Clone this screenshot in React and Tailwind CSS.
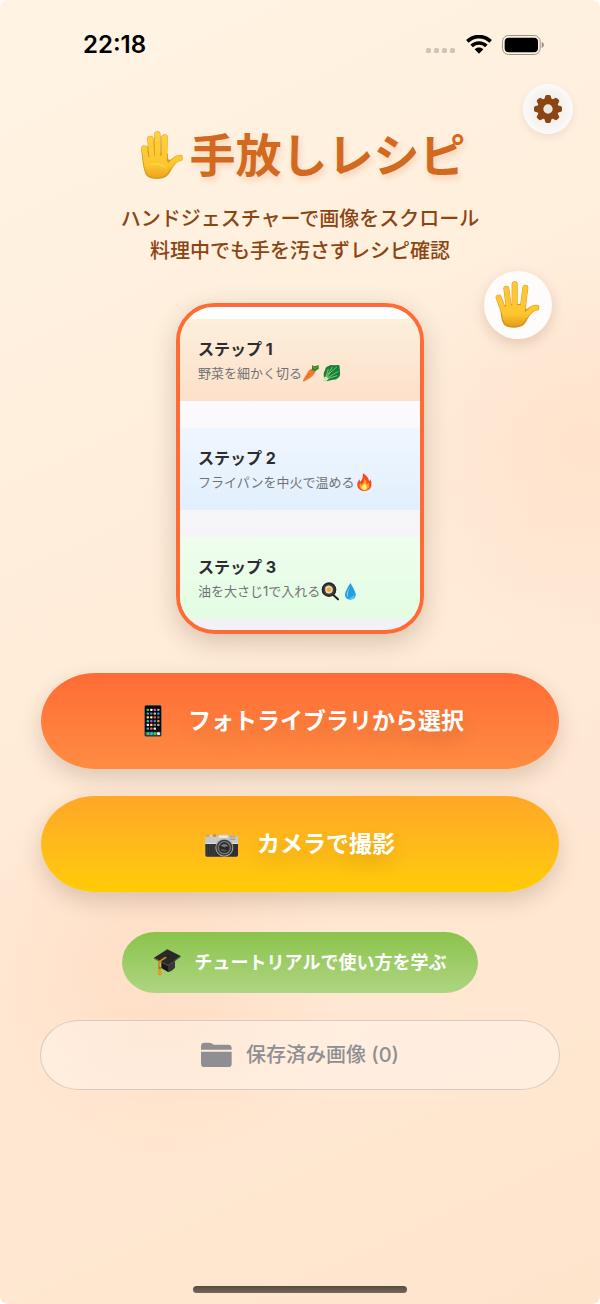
const steps = [
  { id: 1, text: "野菜を細かく切る", color: "from-[#fcefdc] to-[#fde0c9]", icons: [Carrot, Greens] },
  { id: 2, text: "フライパンを中火で温める", color: "from-[#f0f6fe] to-[#e1f0fd]", icons: [Fire] },
  { id: 3, text: "油を大さじ1で入れる", color: "from-[#effeee] to-[#e3fce3]", icons: [Pan, Drop] },
];

const App = () => {
  return (
    <div className="bg-white font-['Inter','Noto_Sans_CJK_JP',sans-serif]">
      <div className="min-h-screen flex flex-col rounded-lg overflow-hidden bg-[radial-gradient(circle_at_97%_34%,rgba(255,180,140,0.17),transparent_200px),radial-gradient(circle_at_26%_74%,rgba(255,170,130,0.18),transparent_200px),linear-gradient(155deg,#fff4e4_0%,#ffecd9_45%,#ffe4cc_100%)]">
        <StatusBar />

        <main className="flex-1 flex flex-col px-[41px]">
          <div className="flex justify-end -mr-3.5">
            <button
              aria-label="設定"
              className="size-[50px] rounded-full flex items-center justify-center bg-radial from-[#eae5e1] to-[#fbfaf8] to-70% shadow-[0_3px_8px_rgba(0,0,0,0.08)]"
            >
              <Gear />
            </button>
          </div>

          <h1 className="-mt-1 flex items-center justify-center gap-1 text-[46px] leading-[50px] font-bold text-[#d2691e] whitespace-nowrap [text-shadow:2px_4px_6px_rgba(210,105,30,0.2)]">
            <RaisedHand />
            手放しレシピ
          </h1>

          <p className="mt-[23px] text-center text-[20px] leading-8 font-medium text-[#8b4513]">
            ハンドジェスチャーで画像をスクロール
            <br />
            料理中でも手を汚さずレシピ確認
          </p>

          <div className="relative mt-9">
            <StepCard />
            {/* floating hand over the card corner */}
            <div className="absolute -top-8 right-[7px] size-[68px] rounded-full flex items-center justify-center bg-[#fdfcfb] shadow-[0_5px_14px_rgba(80,40,0,0.16)]">
              <SpreadHand />
            </div>
          </div>

          <div className="mt-[39px] flex flex-col gap-[27px]">
            <button className="h-24 rounded-[54px_/_48px] flex items-center justify-center gap-[18px] text-[23px] font-bold text-white bg-linear-to-b from-[#ff6b35] to-[#ff8c42] shadow-[0_9px_22px_rgba(60,40,20,0.18)] [text-shadow:0_9px_20px_rgba(0,0,0,0.14)]">
              <Phone />
              フォトライブラリから選択
            </button>
            <button className="h-24 rounded-[54px_/_48px] flex items-center justify-center gap-[18px] text-[23px] font-bold text-white bg-linear-to-b from-[#ffa726] to-[#ffcc02] shadow-[0_9px_22px_rgba(60,40,20,0.18)] [text-shadow:0_9px_20px_rgba(0,0,0,0.14)]">
              <Camera />
              カメラで撮影
            </button>
          </div>

          <button className="mt-10 h-[61px] px-8 self-center rounded-[34px_/_31px] flex items-center gap-3.5 text-[18px] font-bold text-white bg-linear-to-b from-[#8bc34a] to-[#aed581]">
            <Cap />
            チュートリアルで使い方を学ぶ
          </button>

          <button className="mt-7 h-[68px] rounded-[38px_/_34px] flex items-center justify-center gap-3.5 text-[20px] font-medium text-[#8e8e93] bg-white/30 ring-1 ring-[#d9cabd]">
            <Folder />
            保存済み画像 (0)
          </button>
        </main>

        <div className="mx-auto mb-[11px] h-[7px] w-[214px] rounded-full bg-linear-to-b from-[#554a41] to-[#75695e]" />
      </div>
    </div>
  );
};

function StatusBar() {
  return (
    <header className="h-[84px] pt-1.5 pl-[83px] pr-14 flex items-center justify-between">
      <span className="text-[24px] font-semibold text-black">22:18</span>
      <div className="flex items-center gap-2.5">
        <svg width="30" height="20" viewBox="0 0 30 20" fill="#d1c5b8">
          <rect x="0" y="13" width="5" height="5" rx="1.5" />
          <rect x="8" y="13" width="5" height="5" rx="1.5" />
          <rect x="16" y="13" width="5" height="5" rx="1.5" />
          <rect x="24" y="13" width="5" height="5" rx="1.5" />
        </svg>
        <svg width="26" height="20" viewBox="0 0 78 60" fill="none" stroke="#000" strokeWidth="11">
          <path d="M4 19C24 0 54 0 74 19" />
          <path d="M17 33C29 21 49 21 61 33" />
          <path d="M39 56L26 43C33 36 45 36 52 43Z" fill="#000" stroke="none" />
        </svg>
        <svg width="42" height="20" viewBox="0 0 126 60">
          <rect x="1.500" y="1.500" width="113" height="57" rx="18" fill="none" stroke="#9d9488" strokeWidth="3" />
          <rect x="8" y="8" width="100" height="44" rx="12" fill="#000" />
          <path d="M119 21C128 23 128 37 119 39Z" fill="#9d9488" />
        </svg>
      </div>
    </header>
  );
}

function StepCard() {
  return (
    <div className="mx-auto w-[248px] border-4 border-[#ff6b35] rounded-[38px] overflow-hidden pt-3 pb-[11px] flex flex-col gap-[27px] bg-linear-to-b from-white to-[#f1f1f6] shadow-[0_8px_26px_rgba(70,45,20,0.22)]">
      {steps.map(({ id, text, color, icons }) => (
        <section key={id} className={`h-[82px] px-[18px] pt-[19px] bg-linear-to-b ${color}`}>
          <h2 className="text-[16px] leading-[22px] font-bold text-[#2d2d30]">ステップ {id}</h2>
          <p className="flex items-center text-[13px] leading-[26px] text-[#727275] whitespace-nowrap">
            {text}
            {icons.map((Icon, i) => (
              <Icon key={i} />
            ))}
          </p>
        </section>
      ))}
    </div>
  );
}

function Gear() {
  return (
    <svg width="28" height="28" viewBox="-42 -42 84 84">
      <g fill="#8b4513">
        {[0, 45, 90, 135, 180, 225, 270, 315].map((a) => (
          <path key={a} d="M-12 -26L-8 -39Q-7 -42 -4 -42H4Q7 -42 8 -39L12 -26Z" transform={`rotate(${a})`} />
        ))}
      </g>
      <circle r="23" fill="none" stroke="#8b4513" strokeWidth="18" />
    </svg>
  );
}

function RaisedHand() {
  return (
    <svg width="51" height="50" viewBox="-9 0 153 150" className="shrink-0" strokeLinecap="round" strokeLinejoin="round">
      <defs>
        <linearGradient id="palmA" x1="0" y1="0" x2="0" y2="150" gradientUnits="userSpaceOnUse">
          <stop offset="0" stopColor="#ffd23c" />
          <stop offset="0.7" stopColor="#fcc62d" />
          <stop offset="1" stopColor="#e99f18" />
        </linearGradient>
      </defs>
      {/* darker rim first, then the skin */}
      <g stroke="#e5a32c" strokeWidth="19" fill="none">
        <path d="M19 55L27 105M37 27L43 95M58 13L59 90M80 22L78 100M125 84C112 84 102 98 94 110" />
      </g>
      <path d="M10 60L90 72C88 92 94 93 106 83L116 95C104 108 100 125 87 138C74 150 38 150 26 137C15 121 13 88 10 60Z" fill="#dd9823" />
      <g stroke="url(#palmA)" strokeWidth="16" fill="none">
        <path d="M19 55L27 105M37 27L43 95M58 13L59 90M80 22L78 100M125 84C112 84 102 98 94 110" />
      </g>
      <path d="M16 80L86 76C84 99 92 104 105 92C99 108 96 124 84 134C72 145 41 145 30 134C20 121 17 101 16 80Z" fill="url(#palmA)" />
      <g stroke="#d99625" strokeWidth="2" fill="none">
        <path d="M28 48L33 80M48 25L50 73M69 18L69 73" />
      </g>
      <path d="M38 103C52 100 66 101 82 113" stroke="#ffe069" strokeWidth="5" opacity="0.45" fill="none" />
    </svg>
  );
}

function SpreadHand() {
  return (
    <svg width="48" height="52" viewBox="0 0 144 156" strokeLinecap="round" strokeLinejoin="round">
      <defs>
        <linearGradient id="palmB" x1="0" y1="0" x2="0" y2="150" gradientUnits="userSpaceOnUse">
          <stop offset="0" stopColor="#ffc735" />
          <stop offset="0.7" stopColor="#fdc62e" />
          <stop offset="1" stopColor="#dc951a" />
        </linearGradient>
      </defs>
      <g stroke="#dc982b" strokeWidth="18" fill="none">
        <path d="M14 56L32 104M37 29L46 96M62 16L62 90M94 26L85 98M127 86C113 85 106 96 96 110" />
      </g>
      <path d="M19 82C27 87 33 82 36 76L90 74C89 89 98 94 108 84L117 95C105 106 101 123 91 136C80 149 42 149 31 138C21 126 20 105 19 82Z" fill="#d89020" />
      <g stroke="url(#palmB)" strokeWidth="15" fill="none">
        <path d="M14 56L32 104M37 29L46 96M62 16L62 90M94 26L85 98M127 86C113 85 106 96 96 110" />
      </g>
      <path d="M24 88L40 80L84 78C86 99 95 103 107 92C100 108 97 123 88 132C78 144 45 144 34 134C25 124 23 108 24 88Z" fill="url(#palmB)" />
    </svg>
  );
}

function Phone() {
  const rows = [
    ["#35d159", "#fff", "#b768dd", "#aaa"],
    ["#25a7f2", "#777", "#d5bda8", "#25a7f2"],
    ["#ffe15a", "#fff", "#ff5267", "#777"],
    ["#26bfd3", "#dd46c2", "#288df0", "#ff9500"],
    ["#eee", "#ffe15a", "#888", "#aaa"],
    ["#20aefa", "#ff5a59", "#eee", "#111"],
  ];
  return (
    <svg width="34" height="34" viewBox="-25 -3 102 102">
      <rect width="52" height="95" rx="6" fill="#555" />
      <rect x="2" y="2" width="48" height="91" rx="4" fill="#090909" />
      {rows.map((row, y) =>
        row.map((c, x) => <rect key={`${x}-${y}`} x={7 + x * 10.5} y={11 + y * 11.3} width="7" height="7" rx="2" fill={c} />)
      )}
      <rect x="3" y="80" width="46" height="12" rx="2" fill="#43504f" />
      {["#35d159", "#25bde0", "#35d159", "#fff"].map((c, x) => (
        <rect key={x} x={7 + x * 10.5} y="82" width="8" height="8" rx="2" fill={c} />
      ))}
    </svg>
  );
}

function Camera() {
  return (
    <svg width="34" height="34" viewBox="0 -22 102 102">
      <rect x="4" y="1" width="8" height="7" fill="#c9a26b" />
      <rect x="15" y="1" width="7" height="7" fill="#d8d4cc" />
      <rect x="24" y="0" width="9" height="8" fill="#b98e5c" />
      <path d="M1 10Q1 7 4 7H35L41 1H71L74 5H96Q99 5 99 9V62Q99 67 94 67H6Q1 67 1 62Z" fill="#c9c9c9" />
      <path d="M1 28H99V62Q99 67 94 67H6Q1 67 1 62Z" fill="#303030" />
      <path d="M7 30V65M14 30V65M21 30V65M28 30V65" stroke="#3e3e3e" strokeWidth="3" />
      <rect x="42" y="4" width="26" height="6" fill="#f4f0df" />
      <rect x="74" y="4" width="17" height="13" fill="#a4a19e" />
      <path d="M75 8H90M75 12H90" stroke="#d6d3cd" strokeWidth="2" />
      <rect x="1" y="26" width="98" height="3" fill="#dedede" />
      <circle cx="58" cy="40" r="27" fill="#aaa" />
      <circle cx="58" cy="40" r="24" fill="#373737" />
      <circle cx="58" cy="40" r="20" fill="#777" />
      <circle cx="58" cy="40" r="16" fill="#292929" />
      <path d="M47 34C53 27 64 27 70 35L58 39Z" fill="#737a80" />
      <path d="M47 43L66 48C60 55 49 52 47 43Z" fill="#50575c" />
      <circle cx="85" cy="22" r="3" fill="#ffd22c" />
    </svg>
  );
}

function Cap() {
  return (
    <svg width="27" height="27" viewBox="0 0 81 81">
      <path d="M22 39V57L42 69Q61 62 63 53V34Z" fill="#181818" />
      <path d="M42 49L63 34V53Q60 62 42 69Z" fill="#373737" />
      <path d="M0 26L40 1L80 21L43 48Z" fill="#292929" />
      <path d="M0 26L43 48L80 21V24L43 52L0 29Z" fill="#515151" />
      <path d="M42 21L23 33Q14 37 15 46L16 61" fill="none" stroke="#ce861d" strokeWidth="5" />
      <path d="M14 57H21L23 78Q16 81 11 77Z" fill="#e39a26" />
      <circle cx="17" cy="57" r="4" fill="#b96d12" />
      <ellipse cx="41" cy="22" rx="7" ry="4" fill="#202020" />
    </svg>
  );
}

function Folder() {
  return (
    <svg width="31" height="26" viewBox="0 0 93 78" fill="#8e8e93">
      <path d="M0 23V12Q0 2 11 2H25Q30 2 34 5L38 8H82Q92 8 92 19V23Z" />
      <path d="M0 29H92V65Q92 75 82 75H10Q0 75 0 65Z" />
    </svg>
  );
}

function Carrot() {
  return (
    <svg width="20" height="20" viewBox="0 0 60 60">
      <path d="M4 56Q2 54 5 47L21 22Q27 14 35 19Q43 24 37 33Q26 47 4 56Z" fill="#f47b32" />
      <path d="M18 31L25 36M14 40L20 44M28 22L34 29" stroke="#d9571d" strokeWidth="2" />
      <path d="M30 7L38 10L50 6V18L45 20L39 26L30 20Z" fill="#2f8527" />
      <path d="M33 11L39 17L46 10" stroke="#79bd39" strokeWidth="3" fill="none" />
    </svg>
  );
}

function Greens() {
  return (
    <svg width="20" height="20" viewBox="0 0 60 60">
      <path d="M6 44Q3 30 9 22Q11 10 20 9Q26 4 34 7L50 6Q54 7 53 14L54 28Q56 40 48 45Q42 52 32 50L14 55Z" fill="#16803a" />
      <path d="M9 50Q20 30 44 12M11 44L19 18M13 42L31 12M16 47L46 38M17 44L49 25" stroke="#7cc569" strokeWidth="3" fill="none" />
      <path d="M2 54L8 41Q17 40 20 48L10 57Q4 58 2 54Z" fill="#d2e9ae" />
    </svg>
  );
}

function Fire() {
  return (
    <svg width="20" height="20" viewBox="0 0 60 60">
      <path d="M27 4Q44 14 45 28Q48 27 49 21Q54 30 52 41Q49 55 32 57Q14 57 10 43Q8 32 16 22Q17 28 20 29Q28 18 27 4Z" fill="#f9481f" />
      <path d="M30 18Q39 27 39 36Q43 35 43 31Q49 43 43 51Q33 59 22 52Q13 45 18 34Q22 38 24 37Q32 29 30 18Z" fill="#ff9d22" />
      <path d="M31 34Q41 44 37 51Q31 57 25 51Q20 45 26 40Q31 39 31 34Z" fill="#fff071" />
    </svg>
  );
}

function Pan() {
  return (
    <svg width="20" height="20" viewBox="0 0 60 60">
      <path d="M36 38L54 55" stroke="#222" strokeWidth="6" strokeLinecap="round" />
      <circle cx="27" cy="26" r="22" fill="#252525" />
      <circle cx="27" cy="26" r="17" fill="#48423c" />
      <path d="M16 19Q24 10 33 16Q40 20 38 28Q38 36 30 37Q19 40 16 30Z" fill="#e8e0cf" />
      <circle cx="27" cy="26" r="7" fill="#f7a824" />
    </svg>
  );
}

function Drop() {
  return (
    <svg width="20" height="20" viewBox="0 0 60 60">
      <path d="M31 6Q17 28 15 39C13 62 49 62 47 39Q45 28 31 6Z" fill="#239fe3" />
      <path d="M30 17Q21 31 20 38Q20 46 25 50Q20 38 30 17Z" fill="#8addff" />
      <path d="M27 50Q40 52 42 40Q45 53 33 54Z" fill="#70d6ff" />
    </svg>
  );
}

export default App;
